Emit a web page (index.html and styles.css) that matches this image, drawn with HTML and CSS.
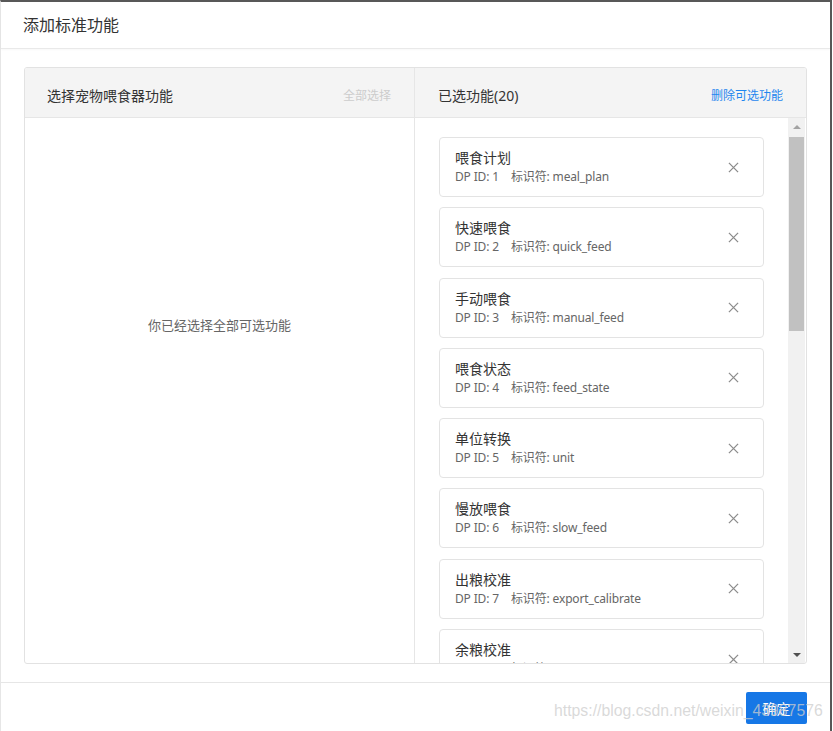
FILE: index.html
```html
<!DOCTYPE html>
<html lang="zh-CN">
<head>
<meta charset="utf-8">
<title>添加标准功能</title>
<link rel="stylesheet" href="styles.css">
</head>
<body>
<div class="frame">
  <header class="modal-header">添加标准功能</header>
  <main class="modal-body">
    <div class="transfer">
      <section class="col col-left">
        <div class="col-head">
          <span class="head-title">选择宠物喂食器功能</span>
          <span class="head-action disabled">全部选择</span>
        </div>
        <div class="empty">你已经选择全部可选功能</div>
      </section>
      <section class="col col-right">
        <div class="col-head">
          <span class="head-title">已选功能(20)</span>
          <span class="head-action link">删除可选功能</span>
        </div>
        <div class="list-wrap">
          <div class="list">
            <div class="card"><div class="card-text"><div class="card-title">喂食计划</div><div class="card-sub"><span>DP ID: 1</span><span class="ident">标识符: meal_plan</span></div></div><svg class="close" viewBox="0 0 12 12"><path d="M1 1L11 11M11 1L1 11"/></svg></div>
            <div class="card"><div class="card-text"><div class="card-title">快速喂食</div><div class="card-sub"><span>DP ID: 2</span><span class="ident">标识符: quick_feed</span></div></div><svg class="close" viewBox="0 0 12 12"><path d="M1 1L11 11M11 1L1 11"/></svg></div>
            <div class="card"><div class="card-text"><div class="card-title">手动喂食</div><div class="card-sub"><span>DP ID: 3</span><span class="ident">标识符: manual_feed</span></div></div><svg class="close" viewBox="0 0 12 12"><path d="M1 1L11 11M11 1L1 11"/></svg></div>
            <div class="card"><div class="card-text"><div class="card-title">喂食状态</div><div class="card-sub"><span>DP ID: 4</span><span class="ident">标识符: feed_state</span></div></div><svg class="close" viewBox="0 0 12 12"><path d="M1 1L11 11M11 1L1 11"/></svg></div>
            <div class="card"><div class="card-text"><div class="card-title">单位转换</div><div class="card-sub"><span>DP ID: 5</span><span class="ident">标识符: unit</span></div></div><svg class="close" viewBox="0 0 12 12"><path d="M1 1L11 11M11 1L1 11"/></svg></div>
            <div class="card"><div class="card-text"><div class="card-title">慢放喂食</div><div class="card-sub"><span>DP ID: 6</span><span class="ident">标识符: slow_feed</span></div></div><svg class="close" viewBox="0 0 12 12"><path d="M1 1L11 11M11 1L1 11"/></svg></div>
            <div class="card"><div class="card-text"><div class="card-title">出粮校准</div><div class="card-sub"><span>DP ID: 7</span><span class="ident">标识符: export_calibrate</span></div></div><svg class="close" viewBox="0 0 12 12"><path d="M1 1L11 11M11 1L1 11"/></svg></div>
            <div class="card"><div class="card-text"><div class="card-title">余粮校准</div><div class="card-sub"><span>DP ID: 8</span><span class="ident">标识符: surplus_grain_calibrate</span></div></div><svg class="close" viewBox="0 0 12 12"><path d="M1 1L11 11M11 1L1 11"/></svg></div>
          </div>
          <div class="scrollbar">
            <div class="sb-btn"><span class="tri up"></span></div>
            <div class="sb-track"><div class="sb-thumb"></div></div>
            <div class="sb-btn"><span class="tri down"></span></div>
          </div>
        </div>
      </section>
    </div>
  </main>
  <footer class="modal-footer">
    <button class="btn-primary">确定</button>
  </footer>
  <div class="watermark">https://blog.csdn.net/weixin_43987576</div>
</div>
</body>
</html>
```

FILE: styles.css
```css
* { box-sizing: border-box; }
html, body { margin: 0; padding: 0; background: #ffffff; }
body {
  font-family: "Noto Sans", "Noto Sans CJK SC", sans-serif;
  color: #333333;
  width: 833px;
  height: 731px;
  overflow: hidden;
}
.frame {
  position: relative;
  width: 832px;
  height: 731px;
  border-top: 2px solid #585858;
  border-right: 2px solid #585858;
  border-left: 1px solid #e6e6e6;
  display: flex;
  flex-direction: column;
  background: #fff;
}
.modal-header {
  height: 47px;
  flex: none;
  padding-left: 22px;
  font-size: 16px;
  line-height: 46px;
  color: #333;
  border-bottom: 1px solid #e9e9e9;
  box-shadow: 0 1px 2px rgba(0,0,0,0.03);
}
.modal-body {
  flex: 1;
  min-height: 0;
  padding: 18px 23px 18px 23px;
  display: flex;
}
.transfer {
  flex: 1;
  min-height: 0;
  display: flex;
  border: 1px solid #e2e2e2;
  border-radius: 3px;
  overflow: hidden;
}
.col { display: flex; flex-direction: column; min-height: 0; }
.col-left { width: 390px; border-right: 1px solid #e6e6e6; flex: none; }
.col-right { flex: 1; }
.col-head {
  height: 50px;
  flex: none;
  background: #f4f4f4;
  border-bottom: 1px solid #e6e6e6;
  display: flex;
  align-items: center;
  justify-content: space-between;
  padding: 5px 23px 0 22px;
}
.col-right .col-head { padding-left: 23px; padding-right: 23px; }
.head-title { font-size: 14px; color: #333; }
.head-action { font-size: 12px; }
.head-action.disabled { color: #cccccc; }
.head-action.link { color: #1f86ef; }
.empty {
  padding-top: 198px;
  text-align: center;
  font-size: 13px;
  line-height: 18px;
  color: #666;
}
.list-wrap { flex: 1; display: flex; min-height: 0; }
.list {
  flex: 1;
  min-height: 0;
  overflow: hidden;
  padding: 19px 24px 0 24px;
}
.card {
  height: 60px;
  margin-bottom: 10.3px;
  border: 1px solid #e3e3e3;
  border-radius: 4px;
  display: flex;
  align-items: center;
  justify-content: space-between;
  padding: 0 24px 0 15px;
}
.card-title { font-size: 14px; line-height: 20px; color: #333; }
.card-sub { font-size: 12px; line-height: 18px; color: #666; letter-spacing: -0.15px; }
.ident { margin-left: 12px; }
.close { width: 11px; height: 11px; flex: none; }
.close path { stroke: #8c8c8c; stroke-width: 1.4; fill: none; }
.scrollbar {
  width: 17px;
  flex: none;
  margin-right: 1px;
  background: #f1f1f1;
  display: flex;
  flex-direction: column;
}
.sb-btn { height: 17px; flex: none; display: flex; align-items: center; justify-content: center; }
.sb-track { flex: 1; padding-top: 2px; }
.sb-thumb { height: 194px; margin: 0 1px; background: #c1c1c1; }
.tri { width: 0; height: 0; border-left: 4px solid transparent; border-right: 4px solid transparent; }
.tri.up { border-bottom: 4px solid #a3a3a3; }
.tri.down { border-top: 4px solid #505050; }
.modal-footer {
  height: 49px;
  flex: none;
  border-top: 1px solid #e6e6e6;
  display: flex;
  justify-content: flex-end;
  align-items: flex-start;
  padding: 9px 23px 0 0;
}
.btn-primary {
  width: 61px;
  height: 32px;
  border: none;
  border-radius: 2px;
  background: #1677e6;
  color: #fff;
  font-family: "Noto Sans CJK SC", sans-serif;
  font-size: 14px;
  padding: 0;
}
.watermark {
  position: absolute;
  left: 553px;
  top: 700px;
  font-family: "Liberation Sans", Arial, sans-serif;
  font-size: 15.8px;
  color: rgba(205, 205, 205, 0.75);
  white-space: nowrap;
  pointer-events: none;
}
```
